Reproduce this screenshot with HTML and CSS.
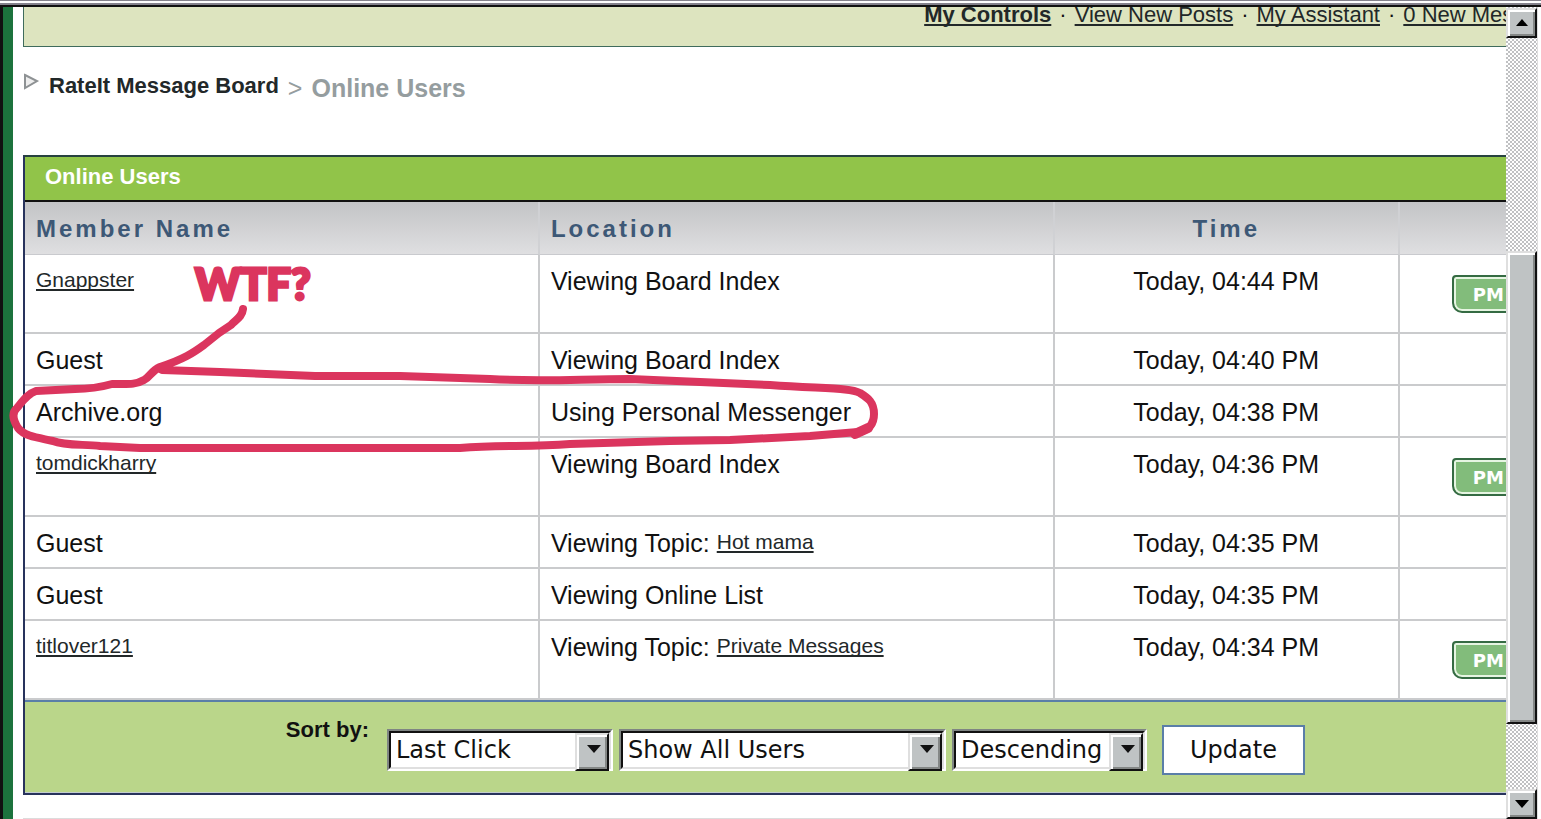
FILE: index.html
```html
<!DOCTYPE html>
<html lang="en">
<head>
    <meta charset="UTF-8">
    <meta name="viewport" content="width=device-width, initial-scale=1.0">
    <title>RateIt Message Board - Online Users</title>
    <link rel="stylesheet" href="styles.css">
</head>
<body>
    <div class="window">
        <main class="page">
            <nav class="user-bar">
                <a href="#" class="strong">My Controls</a>
                <span>·</span>
                <a href="#">View New Posts</a>
                <span>·</span>
                <a href="#">My Assistant</a>
                <span>·</span>
                <a href="#">0 New Messages</a>
            </nav>

            <div class="breadcrumb">
                <svg class="nav-arrow" width="16" height="18" viewBox="0 0 16 18" aria-hidden="true">
                    <path d="M1 2 L13 8 L1 15 Z" fill="#eeeeee" stroke="#8e9294" stroke-width="2"/>
                </svg>
                <a href="#">RateIt Message Board</a>
                <span class="sep">&gt;</span>
                <span class="current">Online Users</span>
            </div>

            <section class="board">
                <h1>Online Users</h1>
                <table>
                    <thead>
                        <tr>
                            <th class="name">Member Name</th>
                            <th class="location">Location</th>
                            <th class="time">Time</th>
                            <th class="contact"></th>
                        </tr>
                    </thead>
                    <tbody>
                        <tr class="member">
                            <td><a href="#">Gnappster</a></td>
                            <td>Viewing Board Index</td>
                            <td class="time">Today, 04:44 PM</td>
                            <td class="contact"><button type="button" class="pm">PM</button></td>
                        </tr>
                        <tr>
                            <td>Guest</td>
                            <td>Viewing Board Index</td>
                            <td class="time">Today, 04:40 PM</td>
                            <td class="contact"></td>
                        </tr>
                        <tr>
                            <td>Archive.org</td>
                            <td>Using Personal Messenger</td>
                            <td class="time">Today, 04:38 PM</td>
                            <td class="contact"></td>
                        </tr>
                        <tr class="member">
                            <td><a href="#">tomdickharry</a></td>
                            <td>Viewing Board Index</td>
                            <td class="time">Today, 04:36 PM</td>
                            <td class="contact"><button type="button" class="pm">PM</button></td>
                        </tr>
                        <tr>
                            <td>Guest</td>
                            <td>Viewing Topic: <a href="#">Hot mama</a></td>
                            <td class="time">Today, 04:35 PM</td>
                            <td class="contact"></td>
                        </tr>
                        <tr>
                            <td>Guest</td>
                            <td>Viewing Online List</td>
                            <td class="time">Today, 04:35 PM</td>
                            <td class="contact"></td>
                        </tr>
                        <tr class="member">
                            <td><a href="#">titlover121</a></td>
                            <td>Viewing Topic: <a href="#">Private Messages</a></td>
                            <td class="time">Today, 04:34 PM</td>
                            <td class="contact"><button type="button" class="pm">PM</button></td>
                        </tr>
                    </tbody>
                </table>
                <form class="sort-bar">
                    <label for="sort-key">Sort by:</label>
                    <div class="selects">
                        <span class="select select-key">
                            <select id="sort-key"><option>Last Click</option></select>
                        </span>
                        <span class="select select-show">
                            <select aria-label="Users to show"><option>Show All Users</option></select>
                        </span>
                        <span class="select select-order">
                            <select aria-label="Sort order"><option>Descending</option></select>
                        </span>
                    </div>
                    <button type="button" class="update">Update</button>
                </form>
            </section>
            <div class="next-row"></div>
        </main>

        <div class="scrollbar">
            <button type="button" class="bevel" aria-label="Scroll up">
                <svg width="12" height="8" viewBox="0 0 12 8"><path d="M6 0 L12 7 H0 Z" fill="#000"/></svg>
            </button>
            <div class="space-above"></div>
            <div class="bevel thumb"></div>
            <div class="space-below"></div>
            <button type="button" class="bevel" aria-label="Scroll down">
                <svg width="14" height="8" viewBox="0 0 14 8"><path d="M0 0 H14 L7 8 Z" fill="#000"/></svg>
            </button>
        </div>
    </div>

    <!-- Hand-drawn note over the table -->
    <svg class="note" width="900" height="470" viewBox="0 0 900 470">
        <text x="195" y="300">WTF?</text>
        <path d="M243 309 C242 318 235 320 231 325 L219 333 L204 345 C193 353 184 359 160 367 C151 371 150 377 144 380 C135 385 129 384 112 384 C98 388 90 389 75 389 L36 391 C27 394 22 402 17 408 C11 413 13 420 18 428 C25 437 40 438 53 441 C65 446 85 444 100 446 L140 448 H460 C500 445 530 447 570 444 L670 441 L730 440 L810 436 L858 432 C870 430 874 423 874 414 C874 402 868 398 860 393 C850 388 830 389 770 385 L700 382 L630 379 C580 379 540 382 490 379 L400 376 H315 L220 372 L162 370" />
        <path d="M855 434 L868 428" class="blot"/>
    </svg>
</body>
</html>
```
FILE: styles.css
```css
* {
    box-sizing: border-box;
}
body {
    margin: 0;
    background-color: #fff;
    color: #111;
    font-family: "Liberation Sans", Arial, sans-serif;
    font-size: 25px;
    line-height: 30px;
}
a {
    color: #222829;
    font-size: 21px;
    text-decoration: underline;
    text-decoration-thickness: 2px;
    text-decoration-skip-ink: none;
    text-underline-offset: 2px;
}

/* Window frame */
.window {
    display: flex;
    height: 100vh;
    padding-right: 3px;
    border-left: 1px solid #84828c;
    border-top: 7px solid #111;
    border-image: linear-gradient(#84828c 1px, #fff 1px, #fff 3px, #84828c 3px, #84828c 5px, #111 5px) 7 0 0 1;
}
.page {
    flex: 1;
    min-width: 0;
    overflow: hidden;
    margin-left: 2px;
    padding-left: 10px;
    border-left: 10px solid #1c733d;
    box-shadow: -2px 0 0 #111;
}

/* Top links */
.user-bar {
    display: flex;
    gap: 8px;
    height: 40px;
    padding-left: 60.7%;
    border-left: 1px solid #3f6b5c;
    border-bottom: 1px solid #3f6b5c;
    background-color: #dde4bf;
    font-size: 22px;
    line-height: 16px;
    white-space: nowrap;
}
.user-bar a {
    font-size: 22px;
}
.strong {
    font-weight: bold;
}

/* Breadcrumb */
.breadcrumb {
    display: flex;
    gap: 9px;
    height: 108px;
    padding: 26px 0 0 1px;
    font-weight: bold;
}
.breadcrumb a {
    font-size: 22px;
    line-height: 26px;
    text-decoration: none;
}
.sep,
.current {
    color: #959d9f;
}
.sep {
    font-weight: normal;
}

/* Online users board */
.board {
    width: 116%;
    border: 2px solid #28335c;
    border-top-color: #27423f;
}
.board h1 {
    margin: 0;
    padding: 5px 20px 8px;
    border-bottom: 2px solid #111;
    background-color: #91c449;
    color: #fff;
    font-size: 22px;
    line-height: 30px;
}
table {
    width: 100%;
    table-layout: fixed;
    border-collapse: separate;
    border-spacing: 0;
}
th {
    height: 53px;
    padding: 2px 11px 0;
    border-right: 2px solid #d0d1d4;
    border-bottom: 1px solid #c9cace;
    background-image: linear-gradient(#c3c4c6, #dfdfe1);
    color: #3d5876;
    font-size: 24px;
    letter-spacing: 3px;
    text-align: left;
}
td {
    height: 52px;
    padding: 11px 11px 9px;
    border-right: 2px solid #cacbcd;
    border-bottom: 2px solid #cacbcd;
    vertical-align: top;
}
td a {
    vertical-align: 3px;
    line-height: 20px;
}
.member td {
    height: 79px;
}
.name,
.location {
    width: 30%;
}
.time {
    width: 20.1%;
    text-align: center;
}
.contact {
    width: 19.9%;
    padding: 20px 0 0 52px;
}
.pm {
    display: block;
    width: 100px;
    height: 38px;
    padding: 0 19px;
    border: 2px solid #356b43;
    border-radius: 4px 4px 4px 10px;
    box-shadow: inset 0 0 0 2px #e6f5e2;
    background-color: #82bc7b;
    color: #fff;
    font: bold 18px "DejaVu Sans", Verdana, sans-serif;
    text-align: left;
}

/* Sort controls */
.sort-bar {
    display: flex;
    align-items: center;
    height: 93px;
    padding-top: 6px;
    padding-left: 15.2%;
    border-top: 2px solid #5a7ea8;
    border-bottom: 1px solid #c3cdd0;
    background-color: #bad68a;
}
.sort-bar label {
    margin-right: 18px;
    padding-bottom: 40px;
    font-size: 22px;
    font-weight: bold;
}
.selects {
    display: flex;
    gap: 6px;
    margin-right: 15px;
}
.select {
    position: relative;
    height: 42px;
    border: 2px solid;
    border-color: #7f8583 #fff #fff #7f8583;
}
.select-key {
    width: 226px;
}
.select-show {
    width: 327px;
}
.select-order {
    width: 195px;
}
select {
    appearance: none;
    width: 100%;
    height: 100%;
    padding: 0 0 0 5px;
    border: 2px solid;
    border-color: #111 #dfdfdf #dfdfdf #111;
    border-radius: 0;
    background-color: #fff;
    color: #111;
    font: 24px "DejaVu Sans", Verdana, sans-serif;
}
/* drop-down arrow, drawn over the right end of the select */
.select::before {
    content: "";
    position: absolute;
    top: 2px;
    right: 2px;
    width: 30px;
    height: 34px;
    border: 2px solid;
    border-color: #dfdfdf #111 #111 #dfdfdf;
    box-shadow: inset 2px 2px 0 #fff, inset -2px -2px 0 #848786;
    background-color: #bfc3c4;
    pointer-events: none;
}
.select::after {
    content: "";
    position: absolute;
    top: 14px;
    right: 10px;
    border: 7px solid transparent;
    border-top: 8px solid #111;
    border-bottom: 0;
    pointer-events: none;
}
.update {
    width: 143px;
    height: 50px;
    padding: 0;
    border: 2px solid #5a7ea8;
    background-color: #fff;
    color: #111;
    font: 24px "DejaVu Sans", Verdana, sans-serif;
}
.next-row {
    margin-top: 23px;
    border-top: 1px solid #dcdcdc;
}

/* Scrollbar */
.scrollbar {
    display: flex;
    flex-direction: column;
    width: 32px;
    padding-top: 1px;
    border-right: 1px solid #dfdfdf;
    background: repeating-conic-gradient(#c0c1c3 0 25%, #fff 0 50%) 0 0 / 4px 4px;
}
.bevel {
    display: flex;
    align-items: center;
    justify-content: center;
    height: 30px;
    padding: 0;
    border: 2px solid;
    border-color: #dfdfdf #111 #111 #dfdfdf;
    box-shadow: inset 2px 2px 0 #fff, inset -2px -2px 0 #848786;
    background-color: #bfc3c4;
}
.space-above {
    flex: 214;
}
.thumb {
    flex: 470;
}
.space-below {
    flex: 65;
}

/* Note */
.note {
    position: absolute;
    top: 0;
    left: 0;
    pointer-events: none;
}
.note path {
    fill: none;
    stroke: #db355e;
    stroke-width: 8px;
    stroke-linecap: round;
    stroke-linejoin: round;
}
.note .blot {
    stroke-width: 10px;
}
.note text {
    fill: #db355e;
    stroke: #db355e;
    stroke-width: 3px;
    font: 900 43px Lato, sans-serif;
}
```
